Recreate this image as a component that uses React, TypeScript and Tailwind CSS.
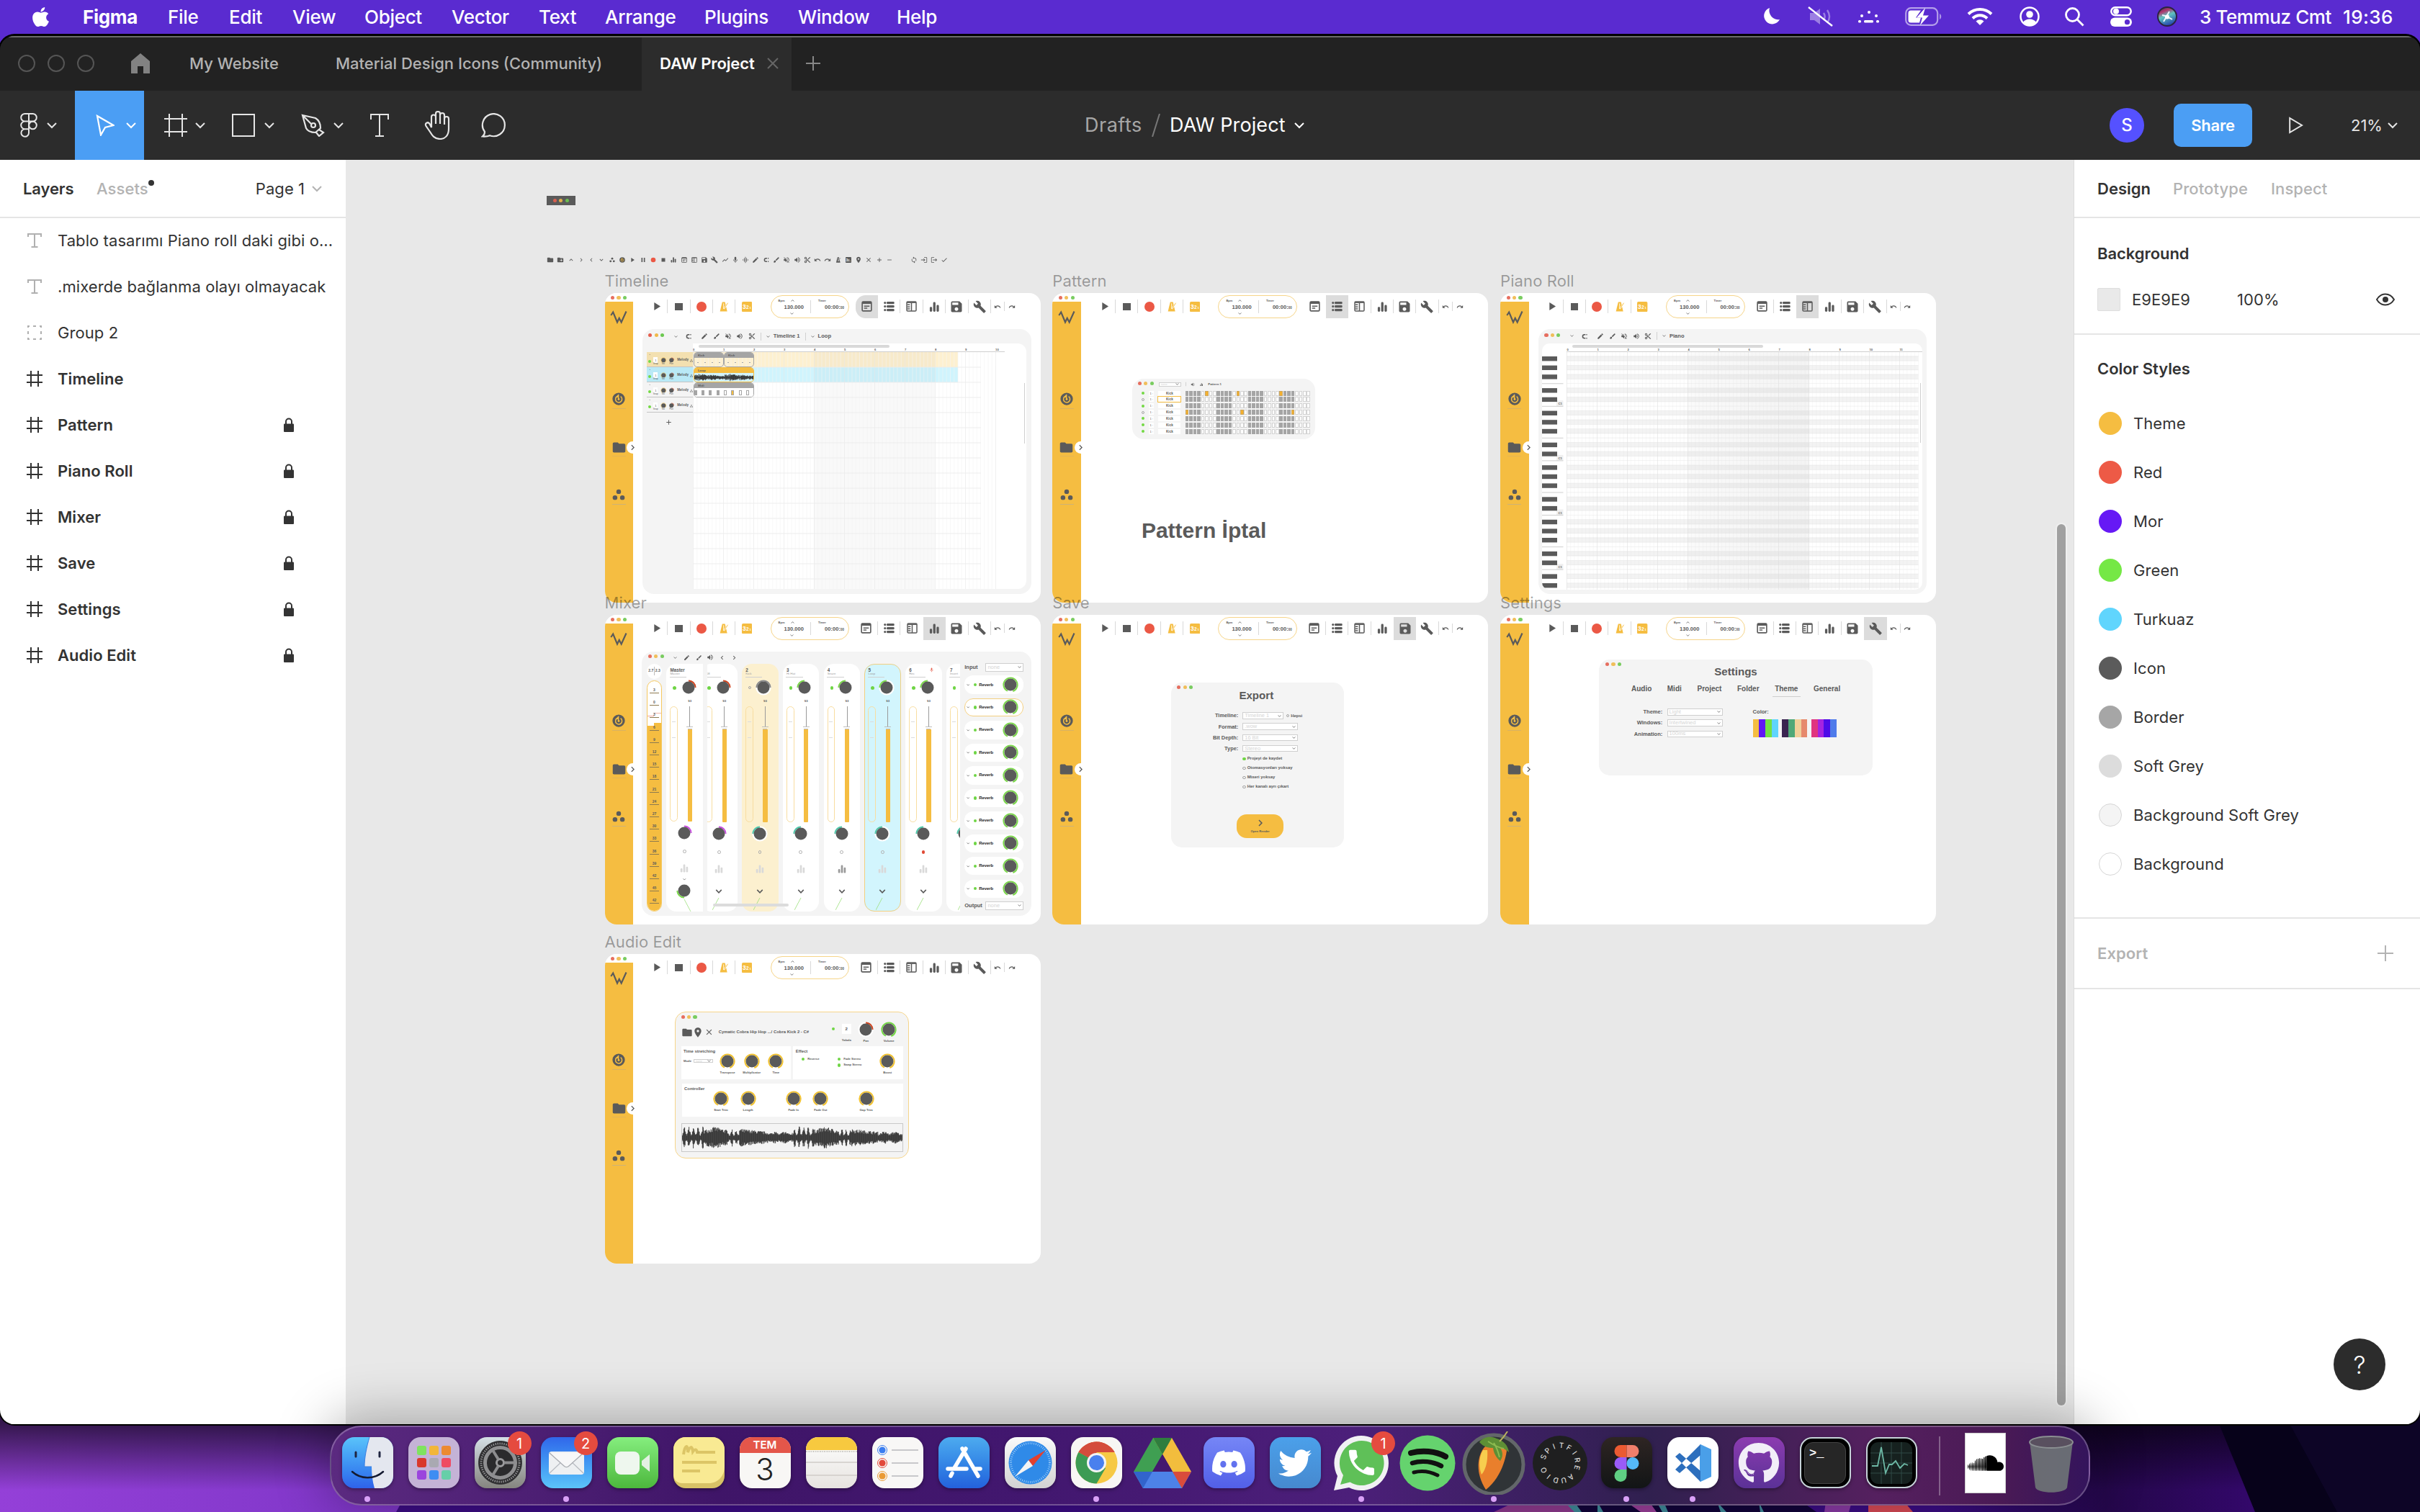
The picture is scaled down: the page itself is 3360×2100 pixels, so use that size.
import React from "react";
import {
  MdAdd, MdBrush, MdCheck, MdChevronLeft, MdChevronRight, MdClose, MdContentCut, MdCreateNewFolder, MdEdit,
  MdExpandLess, MdExpandMore, MdFiberManualRecord, MdFolder, MdGraphicEq, MdLogin, MdLogout, MdMic, MdPause,
  MdPlace, MdPlayArrow, MdRedo, MdRemove, MdSave, MdBuild, MdShowChart, MdStop, MdUndo, MdVolumeOff, MdVolumeUp,
  MdLoop,
} from "react-icons/md";
import { FaApple, FaDiscord, FaGithub, FaSoundcloud, FaTwitter } from "react-icons/fa";

type IconProps = { className?: string };

/* ---------- small drawings ---------- */

const Cluster = ({ className }: IconProps) => (
  <svg viewBox="0 0 24 24" className={className} fill="currentColor">
    <circle cx="12" cy="6.5" r="4.3" /><circle cx="5.2" cy="17.5" r="4.3" /><circle cx="18.8" cy="17.5" r="4.3" />
  </svg>
);
const Restore = ({ className }: IconProps) => (
  <svg viewBox="0 0 24 24" className={className}>
    <circle cx="12" cy="12" r="11.5" fill="currentColor" />
    <path d="M8 8.2a6 6 0 1 0 7.5-.6M11.5 3.8v8.4M11.5 5l-3.6 3.3h4.6" fill="none" stroke="#f5bd41" strokeWidth="2" />
    <circle cx="12" cy="12.6" r="1.9" fill="#f5bd41" />
  </svg>
);
const Bars = ({ className }: IconProps) => (
  <svg viewBox="0 0 24 24" className={className} fill="currentColor">
    <rect x="1.5" y="12" width="5.4" height="11" rx="2.4" /><rect x="9.3" y="1" width="5.4" height="22" rx="2.4" /><rect x="17.1" y="7.5" width="5.4" height="15.5" rx="2.4" />
  </svg>
);
const Note = ({ className }: IconProps) => (
  <svg viewBox="0 0 24 24" className={className} fill="none" stroke="currentColor" strokeWidth="2.6">
    <rect x="1.8" y="1.8" width="20.4" height="20.4" rx="2" /><path d="M2 4.5h20" strokeWidth="3.4" /><path d="M6 11.5h12M6 16h7" />
  </svg>
);
const ListIcon = ({ className }: IconProps) => (
  <svg viewBox="0 0 24 24" className={className} fill="currentColor">
    {[1.5, 9.5, 17.5].map((y) => (
      <g key={y}><circle cx="2.8" cy={y + 2.6} r="2.5" /><rect x="6.5" y={y} width="17" height="5.2" rx="2" /></g>
    ))}
  </svg>
);
const PianoIcon = ({ className }: IconProps) => (
  <svg viewBox="0 0 24 24" className={className} fill="none" stroke="currentColor" strokeWidth="2.4">
    <rect x="1.6" y="1.6" width="20.8" height="20.8" rx="2" /><path d="M2 3.6h20M12 3v19M3 8.5h5.5M3 13h5.5M3 17.5h5.5" />
  </svg>
);
const Metronome = ({ className }: IconProps) => (
  <svg viewBox="0 0 24 24" className={className}>
    <path d="M8.2 1h6.6L20 23H2.8z" fill="currentColor" /><path d="M11.6 4v13" stroke="#fff" strokeWidth="1.6" /><path d="M12 17 22 3" stroke="#fff" strokeWidth="3" /><path d="M13 16 21.5 3" stroke="currentColor" strokeWidth="1.6" />
  </svg>
);
const CountIn = ({ className }: IconProps) => (
  <svg viewBox="0 0 24 24" className={className}>
    <rect width="24" height="24" rx="3" fill="currentColor" />
    <text x="1.5" y="17.5" fontSize="14" fontWeight="700" fill="#fff" fontFamily="Liberation Sans">3</text>
    <text x="10" y="17.5" fontSize="11" fontWeight="700" fill="#fff" fontFamily="Liberation Sans">2</text>
    <text x="17.5" y="17.5" fontSize="7" fontWeight="700" fill="#fff" fontFamily="Liberation Sans">1</text>
  </svg>
);
const Magnet = ({ className }: IconProps) => (
  <svg viewBox="0 0 24 24" className={className} fill="none" stroke="currentColor" strokeWidth="4.4">
    <path d="M15 5H11a7 7 0 0 0 0 14h4" /><path d="M18 5h3.5M18 19h3.5" />
  </svg>
);
const Down = ({ className }: IconProps) => (
  <svg viewBox="0 0 12 12" className={className} fill="none" stroke="currentColor" strokeWidth="1.9"><path d="m1.5 3.5 4.5 4.6 4.5-4.6" /></svg>
);
const HashIcon = ({ className }: IconProps) => (
  <svg viewBox="0 0 22 22" className={className} fill="none" stroke="currentColor" strokeWidth="2"><path d="M6 0v22M16 0v22M0 6h22M0 16h22" /></svg>
);

const Dot = ({ className }: IconProps) => <span className={`block shrink-0 rounded-full ${className}`} />;

const Lights = ({ bright = false }: { bright?: boolean }) => (
  <div className={`flex gap-[3.2px] ${bright ? "" : "opacity-90"}`}>
    <Dot className="size-[5.2px] bg-[#e5604f]" /><Dot className="size-[5.2px] bg-[#f0b94a]" /><Dot className="size-[5.2px] bg-[#6cc850]" />
  </div>
);

const point = (deg: number, r: number) => {
  const a = ((deg - 90) * Math.PI) / 180;
  return `${(12 + r * Math.cos(a)).toFixed(2)} ${(12 + r * Math.sin(a)).toFixed(2)}`;
};
function Knob({ color, from, to, halo, className = "size-6" }: { color: string; from: number; to: number; halo?: boolean; className?: string }) {
  return (
    <svg viewBox="0 0 24 24" className={`shrink-0 ${className}`}>
      {halo && <circle cx="12" cy="12" r="10.6" fill="#fff" />}
      <path d={`M${point(from, 9.6)}A9.6 9.6 0 ${to - from > 180 ? 1 : 0} 1 ${point(to, 9.6)}`} fill="none" stroke={color} strokeWidth="2" />
      <circle cx="12" cy="12" r="8.5" fill="#5a5a5a" />
    </svg>
  );
}

function wavePath(width: number, height: number) {
  let seed = 7;
  const rnd = () => (seed = (seed * 16807) % 2147483647) / 2147483647;
  const mid = height / 2;
  let d = "";
  for (let x = 0; x < width; x += 0.6) {
    const t = ((x / width) * 2) % 1;
    let e = 0.5;
    if (t < 0.2) e = 0.25 + 0.6 * Math.pow(Math.abs(Math.sin(t * 75)), 3);
    else if (t < 0.42) e = 0.8 - Math.abs(t - 0.3) * 2.2;
    else if (t < 0.52) e = 0.22 + 0.5 * Math.pow(Math.abs(Math.sin(t * 80)), 4);
    else if (t < 0.78) e = 0.66 - (t - 0.52) * 0.9;
    else e = 0.25 + 0.2 * Math.abs(Math.sin(t * 32));
    const up = mid * e * (0.5 + 0.5 * rnd());
    const down = mid * e * (0.5 + 0.5 * rnd());
    d += `M${x.toFixed(1)} ${(mid - up).toFixed(1)}V${(mid + down).toFixed(1)}`;
  }
  return d;
}
const Wave = ({ w, h, className }: { w: number; h: number; className?: string }) => (
  <svg viewBox={`0 0 ${w} ${h}`} className={className} preserveAspectRatio="none"><path d={wavePath(w, h)} stroke="#2e2e2e" strokeWidth=".9" /></svg>
);

const Select = ({ value, className }: { value: string; className?: string }) => (
  <div className={`flex items-center justify-between border border-[#cfcfcf] bg-white px-[2px] text-[#d5d5d5] ${className}`}>
    <span className="leading-none font-normal">{value}</span><Down className="size-[5px] text-[#5a5a5a]" />
  </div>
);

/* ---------- artboard shell ---------- */

const views = [Note, ListIcon, PianoIcon, Bars, MdSave, MdBuild];
const viewSizes = ["size-[15px]", "size-[15px]", "size-[15px]", "size-[14.5px]", "size-[20px]", "size-[18.5px]"];

function Artboard({ name, x, y, active, children }: { name: string; x: number; y: number; active: number; children?: React.ReactNode }) {
  return (
    <section className="absolute w-[605px] [font-family:'Liberation_Sans',sans-serif] text-[#5a5a5a]" style={{ left: x, top: y - 30 }}>
      <h3 className="relative h-[30px] [font-family:Inter,sans-serif] text-[22px] leading-[27px] tracking-[0.1px] text-black/35">{name}</h3>
      <div className="flex h-[430px] overflow-hidden rounded-[16px] bg-white">
        <aside className="relative flex w-[39.6px] shrink-0 flex-col">
          <div className="h-[12.4px] bg-white pt-[4px] pl-[8.6px]"><Lights /></div>
          <div className="flex flex-1 flex-col items-center bg-[#f5bd41]">
            <svg viewBox="-1 -1 24 19" className="mt-[11.500px] h-[19px] w-[24px]" fill="none" stroke="#5a5a5a" strokeWidth="2.200"><path d="M.3 6 3.200 1.500l5.800 14 2.700-5.500 3 5.500L21.500.5" /></svg>
            <Restore className="mt-[95px] size-[18px]" />
            <i className="mt-[4px] h-[1px] w-[19px] bg-[#d9b263]" />
            <div className="mt-[42px] flex h-[23px] w-full items-center pl-[9.2px]">
              <MdFolder className="size-[21px] shrink-0" />
              <span className="ml-[.8px] flex size-[17px] shrink-0 items-center justify-center rounded-full bg-white"><MdChevronRight className="size-[15px] shrink-0" /></span>
            </div>
            <i className="h-[1px] w-[19px] bg-[#e4b555]" />
            <Cluster className="mt-[44px] size-[18px]" />
            <i className="mt-[4px] h-[1px] w-[19px] bg-[#cdb377]" />
          </div>
        </aside>
        <div className="flex min-w-0 flex-1 flex-col">
          <header className="flex h-[37.6px] shrink-0 items-center pl-[17px]">
            {[
              <MdPlayArrow className="size-[19px]" />, <span className="size-[10.6px] bg-[#5a5a5a]" />, <Dot className="size-[14px] bg-[#eb5845]" />,
              <Metronome className="size-[14px] text-[#f5bd41]" />, <CountIn className="size-[14.4px] text-[#f5bd41]" />,
            ].map((icon, i) => (
              <div key={i} className={`flex h-[19px] w-[31.3px] items-center justify-center ${i < 4 ? "border-r border-[#d9d9d9]" : ""}`}>{icon}</div>
            ))}
            <div className="mt-[.5px] ml-[17px] flex h-[32px] w-[109.5px] items-center rounded-full border border-[#f6d58a] text-[7.56px] font-bold">
              <div className="flex h-full w-[54.5px] flex-col items-center pl-[12px]">
                <div className="flex h-[10px] w-full items-end"><span className="-ml-[2px] w-[17px] text-[4px] leading-[6px]">Bpm</span><Down className="mb-[1px] size-[5px] rotate-180" /></div>
                <span className="mt-[1px] w-full pl-[6px] leading-[9px]">130.000</span>
                <Down className="mt-[2px] mr-[8px] size-[5px]" />
              </div>
              <i className="h-[18px] w-[1px] bg-[#d9d9d9]" />
              <div className="flex h-full flex-1 flex-col pl-[10px]">
                <span className="mt-[4px] text-[4px] leading-[6px]">Timer</span>
                <span className="mt-[1px] pl-[9px] leading-[9px] whitespace-nowrap">00:00:<span className="text-[4.5px]">00</span></span>
              </div>
            </div>
            <div className="ml-[8.6px] flex items-center">
              {views.map((Icon, i) => (
                <div key={i} className={`flex h-[31.5px] w-[31.4px] items-center ${i === active ? "bg-[#dcdcdc]" : ""} ${i === active && i === 0 ? "rounded-l-[14px]" : ""}`}>
                  <div className={`flex h-[19px] w-full items-center justify-center ${i === active || i + 1 === active ? "" : "border-r border-[#d9d9d9]"}`}><Icon className={viewSizes[i]} /></div>
                </div>
              ))}
              <div className="flex h-[13px] w-[19.3px] items-center justify-center border-r border-[#d9d9d9]"><MdUndo className="size-[10px]" /></div>
              <div className="flex w-[19px] items-center justify-center"><MdRedo className="size-[10px]" /></div>
            </div>
          </header>
          {children}
        </div>
      </div>
    </section>
  );
}

const Rule = () => <i className="h-[11px] w-[1px] bg-[#d0d0d0]" />;

function EditorBar({ labels, bright }: { labels: string[]; bright?: boolean }) {
  return (
    <div className="flex h-[19.5px] items-center pl-[8.5px] text-[7.56px] font-bold">
      <div className="mb-[3px]"><Lights bright={bright} /></div>
      <Down className="ml-[13.5px] size-[5px]" />
      <Magnet className="ml-[11px] size-[8.5px]" />
      <div className="ml-[8px]"><Rule /></div>
      <div className="ml-[5px] flex gap-[6.4px]">
        <MdEdit className="size-[10px]" /><MdBrush className="size-[10px]" /><MdVolumeOff className="size-[10px]" /><MdVolumeUp className="size-[10px]" /><MdContentCut className="size-[10px]" />
      </div>
      {labels.map((l) => (
        <div key={l} className="ml-[7px] flex items-center"><Rule /><Down className="mr-[5px] ml-[7px] size-[5px]" /><span className="leading-none whitespace-nowrap">{l}</span></div>
      ))}
    </div>
  );
}

const Ruler = ({ count, className }: { count: number; className: string }) => (
  <div className={`flex h-[5.7px] border-b border-[#cfcfcf] text-[4.2px] leading-[5px] font-bold ${className}`}>
    {Array.from({ length: count }, (_, i) => <span key={i} className="w-[42px] shrink-0">{i}</span>)}
  </div>
);

/* ---------- timeline ---------- */

function TimelineGrid() {
  return (
    <svg viewBox="0 0 463 329" className="h-[329px] w-[463px]">
      <rect width="368" height="21" fill="#fdf0d0" /><rect y="21" width="368" height="21" fill="#d0f4fd" />
      <rect x="168" width="168" height="329" fill="#000" opacity=".025" />
      {Array.from({ length: 81 }, (_, i) => <path key={i} d={`M${i * 5.25 + 0.5} 0V329`} stroke={i % 8 === 0 ? "#e6e6e6" : "#f4f4f4"} strokeWidth=".8" opacity=".7" />)}
      {Array.from({ length: 15 }, (_, i) => <path key={i} d={`M0 ${21 * (i + 1)}H400`} stroke="#ebebeb" strokeWidth=".9" />)}
    </svg>
  );
}

const trackTints = ["bg-[#f3e0b0]", "bg-[#b9e9f6]", "", ""];

function Clip({ name, wide, amber, children }: { name: string; wide?: boolean; amber?: boolean; children: React.ReactNode }) {
  return (
    <div className={`flex h-[21px] flex-col overflow-hidden rounded-[5px] border ${wide ? "w-[84px]" : "w-[42px]"} ${amber ? "border-[#f5bd41]" : "border-[#a5a5a5]"}`}>
      <div className={`h-[6.5px] pl-[5px] text-[4.4px] leading-[7px] font-bold ${amber ? "bg-[#f5bd41]" : "bg-[#a5a5a5]"}`}>{name}</div>
      {children}
    </div>
  );
}

function Timeline() {
  return (
    <div className="mt-[12.7px] ml-[12.7px] h-[368px] w-[540px] rounded-[16px] bg-[#f4f4f4]">
      <EditorBar labels={["Timeline 1", "Loop"]} bright />
      <div className="flex pl-[6px]">
        <div className="w-[64.3px] shrink-0 pt-[12.5px]">
          {trackTints.map((tint, i) => (
            <div key={i} className={`flex h-[21px] flex-col border-b border-[#c4c4c4] pl-[2px] ${tint}`}>
              <Down className="mt-[2px] ml-[1px] size-[2.6px]" />
              <div className="mt-[2px] flex items-center">
                <Dot className="size-[4px] bg-[#73d944]" />
                <div className="ml-[2.5px] flex w-[8px] flex-col items-center text-[3px] leading-[3px]"><span className="flex h-[8px] w-[6px] items-center justify-center bg-white text-[4px]">1</span>Snap</div>
                <div className="ml-[2px] flex w-[9px] flex-col items-center text-[3px] leading-[3px]"><Knob color="#f5bd41" from={-160} to={150} className="size-[8.5px]" />Vol</div>
                <div className="ml-[2.5px] flex w-[9px] flex-col items-center text-[3px] leading-[3px]"><Knob color="#cf4520" from={0} to={90} className="size-[8.5px]" />Pan</div>
                <span className="mb-[2px] ml-[3.5px] text-[4.6px] leading-none font-bold">Melody</span>
                <Cluster className="mb-[2px] ml-[2px] size-[4px]" />
              </div>
            </div>
          ))}
          <MdAdd className="mt-[7.5px] ml-[25.5px] size-[11px]" />
        </div>
        <div className="relative h-[341.7px] w-[463px] overflow-hidden rounded-tr-[12px] rounded-br-[12px] bg-white">
          <div className="mt-[2.3px] ml-[8px] h-[4px] w-[265px] rounded-full bg-[#d9d9d9]" />
          <Ruler count={11} className="w-[433px]" />
          <div className="flex">
            <TimelineGrid />
          </div>
          <div className="absolute top-[12.3px] left-[.8px] flex w-[84px] flex-col">
            <div className="flex">
              {[0, 1].map((i) => <Clip key={i} name="Kick"><div className="flex justify-around pt-[6px]">{[0, 1, 2, 3].map((k) => <i key={k} className="h-[.7px] w-[2px] bg-[#a5a5a5]" />)}</div></Clip>)}
            </div>
            <Clip name="Loop" wide amber><Wave w={84} h={12} className="h-[13px] w-[84px]" /></Clip>
            <Clip name="Midi" wide>
              <div className="flex items-center gap-[6.3px] bg-white pt-[3px] pb-[6px]">
                {[1, 1, 1, 1, 0, 2, 0, 0].map((v, k) => <i key={k} className={`h-[7px] w-[4px] shrink-0 border border-[#a5a5a5] ${v === 1 ? "bg-[#a5a5a5]" : v === 2 ? "bg-[#f5bd41]" : "bg-white"}`} />)}
              </div>
            </Clip>
          </div>
          <i className="absolute top-[55px] right-[2px] h-[84px] w-[1.4px] bg-[#cfcfcf]" />
        </div>
      </div>
    </div>
  );
}

/* ---------- pattern ---------- */

const stepHits = ["0:5", "0:13", "0:24", "3:0", "3:14", "3:27"];

function Pattern() {
  return (
    <>
      <div className="mt-[81.5px] ml-[71px] h-[84px] w-[254.6px] rounded-[16px] bg-[#f4f4f4] pl-[8px]">
        <div className="flex h-[15.5px] items-center text-[4.8px] font-bold">
          <div className="mb-[3px]"><Lights /></div>
          <Select value="none" className="ml-[7px] h-[6.4px] w-[31px] text-[4px]" />
          <div className="flex scale-y-50 pl-[6.5px]"><Rule /></div>
          <MdVolumeUp className="ml-[6px] size-[6px]" /><Bars className="ml-[6.5px] size-[4.4px]" /><span className="ml-[7px] text-[4.4px]">Pattern 1</span>
        </div>
        {Array.from({ length: 7 }, (_, r) => (
          <div key={r} className="flex h-[8.85px] items-center pl-[5px]">
            <Dot className={r === 1 || r === 3 ? "size-[4px] border-[.5px] border-[#a5a5a5]" : "size-[4px] bg-[#73d944]"} />
            <span className="ml-[6px] w-[7px] bg-white pl-[1.5px] text-[4px] leading-[7px]">1 :</span>
            <span className={`ml-[6.5px] h-[7px] w-[31px] bg-white text-center text-[4.6px] leading-[7px] font-bold ${r === 1 ? "outline-[.6px] outline-[#f5bd41]" : ""}`}>Kick</span>
            <div className="ml-[6.5px] flex gap-[.85px]">
              {Array.from({ length: 32 }, (_, c) => (
                <i key={c} className={`h-[7px] w-[4.6px] border ${stepHits.includes(`${r}:${c}`) ? "border-[#c9a560] bg-[#f5b12f]" : c % 8 < 4 ? "border-[#a5a5a5] bg-[#a5a5a5]" : "border-[#d2d2d2] bg-white"}`} />
              ))}
            </div>
          </div>
        ))}
      </div>
      <p className="mt-[109px] ml-[84px] text-[30px] leading-[36px] font-bold whitespace-nowrap">Pattern İptal</p>
    </>
  );
}

/* ---------- piano roll ---------- */

const blackRows = Array.from({ length: 52 }, (_, i) => i).filter((i) => [0, 2, 4, 7, 9].includes(i % 12));

function Piano() {
  return (
    <div className="mt-[12.5px] ml-[13.4px] h-[367.5px] w-[539px] rounded-[16px] bg-[#f4f4f4]">
      <EditorBar labels={["Piano"]} />
      <div className="relative ml-[5.5px] h-[342px] w-[527.5px] overflow-hidden rounded-[10px] bg-white">
        <div className="mt-[2.3px] ml-[41.7px] h-[4px] w-[265px] rounded-full bg-[#d9d9d9]" />
        <Ruler count={12} className="ml-[34px] w-[494px]" />
        <svg viewBox="0 0 527.5 330" className="h-[330px] w-[527.5px]">
          <defs><linearGradient id="band"><stop offset="0" stopOpacity=".02" /><stop offset="1" stopOpacity=".045" /></linearGradient></defs>
          {blackRows.map((s) => <rect key={s} x="34" y={5.8 + 6.3 * s} width="488.5" height="6.5" fill="#f3f3f3" />)}
          <rect x="202" width="169" height="330" fill="url(#band)" />
          {Array.from({ length: 94 }, (_, i) => <path key={i} d={`M${34.4 + i * 5.25} 0V330`} stroke="#dedede" strokeWidth=".7" opacity={i % 8 === 0 ? 0.9 : 0.3} />)}
          {Array.from({ length: 52 }, (_, i) => <path key={i} d={`M34 ${5.8 + 6.3 * i}H522.5`} stroke="#e4e4e4" strokeWidth=".6" opacity=".8" />)}
          {[11, 23, 35, 47].map((s) => (
            <g key={s}><rect x="20" y={s * 6.3 - 2} width="9.5" height="8" fill="#f0f0f0" /><text x="22.5" y={s * 6.3 + 4} fontSize="4.2" fontWeight="700" fill="#5a5a5a">C1</text></g>
          ))}
          {[6, 11, 18, 23, 30, 35, 42, 47].map((s) => <path key={s} d={`M0 ${6 + s * 6.3}H29.5`} stroke="#c8c8c8" strokeWidth=".9" />)}
          {blackRows.map((s) => <rect key={s} y={6 + 6.3 * s} width="21" height="6.4" fill="#5a5a5a" />)}
        </svg>
        <i className="absolute top-[55px] right-[2px] h-[83px] w-[1.4px] bg-[#cfcfcf]" />
      </div>
    </div>
  );
}

/* ---------- mixer ---------- */

type Channel = { no: string; name: string; kind?: string; arc: string; arc2: string; from: number; to: number; off?: boolean };
const red = { arc: "#cf4520", arc2: "#c94ee0", from: 0, to: 90 };
const green = { arc: "#7bd94a", arc2: "#4fc9ab", from: -90, to: 0 };
const master: Channel = { no: "Master", name: "Master", kind: "master", ...red };
const channels: Channel[] = [
  { no: "", name: "808", ...red },
  { no: "2", name: "Kick", kind: "amber", ...green, arc: "#8a8a8a", to: 90, off: true },
  { no: "3", name: "Hi Hat", ...green },
  { no: "4", name: "Snare", kind: "dark", ...green },
  { no: "5", name: "Loop", kind: "cyan", ...green },
  { no: "6", name: "Rec", kind: "rec", ...green },
  { no: "7", name: "Insert", ...green },
];

function Strip({ c }: { c: Channel }) {
  const tint = c.kind === "amber" ? "bg-[#fcf0cf] rounded-[14px]" : c.kind === "cyan" ? "bg-[#d2f5fd] rounded-[14px] outline-1 -outline-offset-1 outline-[#f3cf80]" : c.kind === "master" ? "bg-white rounded-l-[14px]" : "bg-white rounded-[14px]";
  const halo = c.kind === "amber" || c.kind === "cyan";
  const isMaster = c.kind === "master";
  return (
    <div className={`flex h-[344.3px] w-[50.5px] shrink-0 flex-col ${tint}`}>
      <div className="mt-[5.4px] flex h-[8px] items-center justify-between pr-[11px] pl-[5.2px] text-[6.3px] leading-[8px] font-bold"><span>{c.no}</span>{c.kind === "rec" && <MdMic className="size-[7px] text-[#e5604f]" />}</div>
      <span className="-mt-[.5px] pl-[5.2px] text-[4.4px] leading-[4.4px] text-[#a0a0a0]">{c.name}</span>
      <i className="mt-[.8px] ml-[4.6px] h-[.8px] w-[23.5px] bg-[#d0d0d0]" />
      <div className="mt-[2.8px] flex h-6 items-center pl-[9px]">
        <Dot className={c.off ? "size-[4.4px] border-[.6px] border-[#a5a5a5]" : "size-[4.6px] bg-[#6fd545]"} />
        <Knob color={c.arc} from={c.from} to={c.to} halo={halo} className="ml-[5px] size-6" />
      </div>
      <span className="mt-[4.2px] pl-[30px] text-[4.4px] leading-[6px] font-bold">93</span>
      <div className="mt-[3.6px] flex h-[161px] pl-[5px]">
        <div className="flex h-full w-[10.8px] flex-col items-center rounded-full border border-[#f8dda0] pt-[20px]"><i className="h-[.8px] w-[5px] bg-[#dcdcdc]" /><i className="mt-[21px] h-[.8px] w-[5px] bg-[#dcdcdc]" /></div>
        <div className="ml-[11.7px] flex w-[10px] flex-col items-center">
          <i className="h-[28px] w-[.9px] bg-[#9a9a9a]" /><i className="h-[.8px] w-[9px] bg-[#bdbdbd]" /><i className="mt-[2px] h-[1.4px] w-[6px] bg-[#bdbdbd]" /><i className="w-[6.2px] flex-1 rounded-b-[1px] bg-[#f5bd41]" />
        </div>
      </div>
      <Knob color={c.arc2} from={c.kind === "amber" ? -90 : c.from} to={c.kind === "amber" ? 0 : c.to} halo={halo} className="mt-[4.4px] ml-[13px] size-6" />
      <Dot className={`mt-[11px] ml-[22.7px] size-[4.6px] ${c.kind === "rec" ? "bg-[#e04a35]" : "border-[.7px] border-[#b0b0b0]"}`} />
      <Bars className={`mt-[15px] ml-[19px] size-[12px] ${c.kind === "dark" ? "text-[#9a9a9a]" : "text-[#d9d9d9]"}`} />
      {isMaster ? (
        <><Down className="mt-[7px] ml-[22.8px] size-[4.6px]" /><Knob color="#7bd94a" from={180} to={270} className="mt-[1.5px] ml-[13px] size-6" /></>
      ) : <Down className="mt-[20px] mb-[4px] ml-[20px] size-[10px]" />}
      <svg viewBox="0 0 20 17" className="ml-[16px] h-[17px] w-[20px]"><path d={isMaster ? "M9 0 18 17" : "M9 0 0 17"} stroke="#9be07a" strokeWidth=".8" /></svg>
    </div>
  );
}

const meterMarks = ["3", "0", "3", "6", "9", "12", "15", "18", "21", "24", "27", "30", "33", "36", "39", "42", "45", "42"];

function Mixer() {
  return (
    <div className="mt-[13px] ml-[12.2px] h-[367.6px] w-[540.4px] rounded-[16px] bg-[#f4f4f4]">
      <div className="flex h-[17px] items-center pl-[8.5px]">
        <div className="mb-[3px]"><Lights /></div>
        <Down className="ml-[13.5px] size-[5px]" />
        <MdEdit className="ml-[9px] size-[9px]" /><MdBrush className="ml-[7.5px] size-[9px]" /><MdVolumeUp className="ml-[6.5px] size-[10px]" /><MdChevronLeft className="ml-[6px] size-[11px]" /><MdChevronRight className="ml-[5.5px] size-[11px]" />
      </div>
      <div className="flex pl-[6.6px]">
        <div className="w-[21.2px] text-[5px] font-bold">
          <div className="flex h-[21px] items-center justify-center gap-[1px] rounded-[50%] bg-white"><span>2.7</span><i className="h-[12px] w-[.6px] bg-[#bbb]" /><span>2.3</span></div>
          <div className="relative mt-[2.3px] h-[321px] overflow-hidden rounded-full border border-[#f5c85f] bg-white">
            <i className="absolute top-[61.7px] bottom-0 left-0 w-1/2 bg-[#f5bd41]" /><i className="absolute top-[58.4px] right-0 bottom-0 w-1/2 bg-[#f5bd41]" />
            <i className="absolute top-[48.5px] left-0 h-[.8px] w-1/2 bg-[#f0a59a]" /><i className="absolute top-[44px] right-0 h-[.8px] w-1/2 bg-[#f0b5aa]" />
            <div className="relative flex flex-col items-center pt-[10px]">
              {meterMarks.map((m, i) => <span key={i} className="mb-[10.2px] flex h-[7.03px] w-[13px] items-start justify-center border-b border-[#8d7a50] leading-[5px]">{m}</span>)}
            </div>
          </div>
        </div>
        <div className="ml-[6.2px]"><Strip c={master} /></div>
        <div className="relative ml-[6px] w-[351.5px] overflow-hidden">
          <div className="-ml-[8.5px] flex gap-[6.25px]">{channels.map((c, i) => <Strip key={i} c={c} />)}</div>
          <i className="absolute bottom-[7px] left-[8px] h-[4px] w-[105px] rounded-full bg-[#dcdcdc]" />
        </div>
        <div className="ml-[6px] w-[81.8px] text-[7.5px] font-bold">
          <div className="flex h-[10.5px] items-center justify-between">Input<Select value="none" className="h-[12px] w-[52.6px] font-normal" /></div>
          <div className="mt-[6.2px] flex flex-col gap-[6.2px]">
            {Array.from({ length: 10 }, (_, i) => (
              <div key={i} className={`flex h-[25.3px] items-center rounded-[12px] bg-white pl-[2.5px] text-[5.9px] font-bold text-[#222] ${i === 1 ? "outline-1 -outline-offset-1 outline-[#f3cf80]" : ""}`}>
                <Down className="size-[4.6px] text-[#5a5a5a]" /><Dot className="mr-[3px] ml-[5.5px] size-[4.4px] bg-[#6fd545]" /><span className="w-[32px]">Reverb</span>
                <Knob color="#7bd94a" from={-155} to={160} />
              </div>
            ))}
          </div>
          <div className="mt-[5.6px] flex h-[10.5px] items-center justify-between">Output<Select value="none" className="h-[12px] w-[52.6px] font-normal" /></div>
        </div>
      </div>
    </div>
  );
}

/* ---------- save / settings ---------- */

const exportFields = [["Timeline:", "Timeline 1"], ["Format:", ".wow"], ["Bit Depth:", "16 Bit"], ["Type:", "Stereo"]];
const exportChecks = ["Projeyi de kaydet", "Otomasyonları yoksay", "Mixeri yoksay", "Her kanalı ayrı çıkart"];

function Save() {
  return (
    <div className="mt-[56.4px] ml-[125.4px] flex h-[229.5px] w-[240px] flex-col rounded-[15px] bg-[#f4f4f4]">
      <div className="flex h-[9px] items-center pt-[4px] pl-[8px]"><Lights /></div>
      <h4 className="w-full pr-1 text-center text-[15.1px] leading-[17px] font-bold">Export</h4>
      <div className="mt-[12.5px] text-[7.4px] font-bold">
        {exportFields.map(([label, value], i) => (
          <div key={label} className="flex h-[15.1px] items-center">
            <span className="w-[93px] text-right">{label}</span>
            <Select value={value} className={`ml-[6px] h-[9.4px] ${i === 0 ? "w-[56.5px]" : "w-[77px]"}`} />
            {i === 0 && <><Dot className="ml-[4px] size-[4.4px] border-[.6px] border-[#a5a5a5]" /><span className="ml-[2px] text-[5.9px]">Hepsi</span></>}
          </div>
        ))}
      </div>
      <div className="mt-[.5px] pl-[99px] text-[5.9px] font-bold">
        {exportChecks.map((c, i) => (
          <div key={c} className="flex h-[13px] items-center gap-[2px]"><Dot className={i === 0 ? "size-[4.4px] bg-[#6fd545]" : "size-[4.4px] border-[.6px] border-[#a5a5a5]"} />{c}</div>
        ))}
      </div>
      <div className="mt-[32px] ml-[91px] flex h-[32.4px] w-[64.6px] flex-col items-center rounded-[14px] bg-[#f5bd41] text-[4.2px] font-bold"><MdChevronRight className="mt-[3px] size-[18px]" /><span className="leading-[5px]">Open Render</span></div>
    </div>
  );
}

const settingTabs: [string, number][] = [["Audio", 49.8], ["Midi", 41.7], ["Project", 55.5], ["Folder", 52.2], ["Theme", 53.8], ["General", 40]];
const settingFields = [["Theme:", "Light"], ["Windows:", "Intertwined"], ["Animation:", "100ms"]];
const palettes = [["#f5bd41", "#6017f5", "#73e144", "#5fd4fd"], ["#3a2450", "#4fa878", "#f0d09a", "#e6896d"], ["#e0357f", "#a524e0", "#4d0be8", "#4f7bea"]];

function Settings() {
  return (
    <div className="mt-[24.7px] ml-[97.4px] flex h-[161px] w-[380px] flex-col rounded-[15px] bg-[#f4f4f4]">
      <div className="flex h-[9px] items-center pt-[3px] pl-[9px]"><Lights /></div>
      <h4 className="w-full text-center text-[15.1px] leading-[16px] font-bold">Settings</h4>
      <div className="mt-[9px] flex pl-[45px] text-[10px] leading-[14px] font-bold">
        {settingTabs.map(([t, w]) => <span key={t} style={{ width: w }}>{t}</span>)}
      </div>
      <i className="mt-[3px] ml-[241px] h-[1px] w-[39px] bg-[#cdcdcd]" />
      <div className="mt-[13px] flex text-[7.56px] font-bold">
        <div>
          {settingFields.map(([label, value]) => (
            <div key={label} className="flex h-[15.2px] items-center"><span className="w-[88.3px] text-right">{label}</span><Select value={value} className="ml-[6.3px] h-[9.4px] w-[77px]" /></div>
          ))}
        </div>
        <div className="ml-[42px]">
          <p className="leading-[15px]">Color:</p>
          <div className="mt-[3px] flex gap-[5.7px]">
            {palettes.map((p, i) => <div key={i} className="flex h-[25px] w-[35px]">{p.map((c) => <i key={c} className="flex-1" style={{ backgroundColor: c }} />)}</div>)}
          </div>
        </div>
      </div>
    </div>
  );
}

/* ---------- audio edit ---------- */

const LabeledKnob = ({ label, color = "#f2c22e", from = -155, to = 160, halo, className = "" }: { label: string; color?: string; from?: number; to?: number; halo?: boolean; className?: string }) => (
  <div className={`flex w-[32px] shrink-0 flex-col items-center text-[4.2px] font-bold whitespace-nowrap ${className}`}><Knob color={color} from={from} to={to} halo={halo} /><span className="mt-[1.2px] leading-[6px]">{label}</span></div>
);

function AudioEdit() {
  return (
    <div className="mt-[42.5px] ml-[58px] h-[204px] w-[325.4px] rounded-[15px] border border-[#f6d58a] bg-[#f4f4f4] px-[7.6px]">
      <div className="flex h-[9px] items-end"><Lights /></div>
      <div className="flex h-[37.5px] items-center text-[5.95px] font-bold">
        <MdFolder className="size-[16px] shrink-0" /><MdPlace className="-ml-[.5px] size-[16px] shrink-0" /><MdClose className="ml-[.5px] size-[13px] shrink-0" />
        <span className="ml-[7px] w-[157px] shrink-0 whitespace-nowrap">Cymatic Cobra Hip Hop .../ Cobra Kick 2 - C#</span>
        <Dot className="mb-[10px] size-[4.6px] bg-[#6fd545]" />
        <div className="mt-[2px] ml-[5px] flex w-[22px] flex-col items-center"><span className="h-[14px] w-[13px] bg-white text-center text-[6px] leading-[14px]">2</span><span className="mt-[6.5px] text-[4.2px] leading-[6px]">Yakala</span></div>
        <LabeledKnob label="Pan" color="#cf4520" from={0} to={90} halo />
        <LabeledKnob label="Volume" color="#73d944" />
      </div>
      <div className="flex justify-between">
        <div className="flex h-[46px] w-[152px] bg-white pl-[3.4px]">
          <div className="w-[45px] pt-[3px] text-[5.95px] font-bold whitespace-nowrap">Time stretching<div className="mt-[3.4px] flex items-center text-[4.2px] leading-[12px]">Mode<Select value="none" className="ml-[3px] h-[5px] w-[27px] shrink-0 text-[4px]" /></div></div>
          <LabeledKnob label="Transpose" className="mt-[9px]" /><LabeledKnob label="Multiplicator" className="mt-[9px] ml-[1.6px]" /><LabeledKnob label="Time" className="mt-[9px] ml-[1.6px]" />
        </div>
        <div className="flex h-[46px] w-[152.5px] bg-white pl-[3.4px] font-bold">
          <div className="w-[58px] pt-[3px] text-[5.95px]">Effect<div className="mt-[2.4px] flex items-center gap-[4px] pl-[8px] text-[4.2px] leading-[8px]"><Dot className="size-[4.4px] bg-[#6fd545]" />Reverse</div></div>
          <div className="w-[53.5px] pt-[14.5px] text-[4.2px] leading-[8.3px]">
            {["Fade Stereo", "Swap Stereo"].map((t) => <div key={t} className="flex items-center gap-[4px]"><Dot className="size-[4.4px] bg-[#6fd545]" />{t}</div>)}
          </div>
          <LabeledKnob label="Boost" className="mt-[9px]" />
        </div>
      </div>
      <div className="mt-[6.8px] ml-[1.3px] flex h-[45.3px] bg-white pl-[3px]">
        <span className="w-[35px] pt-[3px] text-[5.95px] font-bold">Controller</span>
        <LabeledKnob label="Start Trim" className="mt-[8.6px]" /><LabeledKnob label="Length" className="mt-[8.6px] ml-[5.6px]" /><LabeledKnob label="Fade In" className="mt-[8.6px] ml-[31.2px]" /><LabeledKnob label="Fade Out" className="mt-[8.6px] ml-[5.6px]" /><LabeledKnob label="Gap Trim" className="mt-[8.6px] ml-[31.3px]" />
      </div>
      <div className="mt-[9.4px] h-[40.4px] w-[308px] border border-[#c9c9c9]"><Wave w={306} h={38} className="h-[38px] w-[306px]" /></div>
    </div>
  );
}

/* ---------- icon strip on the canvas ---------- */

const stripIcons = [
  MdFolder, MdCreateNewFolder, MdExpandLess, MdChevronRight, MdChevronLeft, MdExpandMore, Cluster, Restore, MdPlayArrow, MdPause, MdFiberManualRecord, MdStop,
  Bars, Note, PianoIcon, MdSave, MdBuild, MdShowChart, MdMic, MdGraphicEq, MdEdit, Magnet, MdBrush, MdVolumeOff, MdVolumeUp, MdContentCut, MdUndo, MdRedo,
  Metronome, CountIn, MdPlace, MdClose, MdAdd, MdRemove,
];
const drawnIcons: unknown[] = [Cluster, Restore, Bars, Note, PianoIcon, Magnet, Metronome, CountIn];

function Canvas() {
  return (
    <main className="relative h-full flex-1 overflow-hidden bg-[#e8e8e8]">
      <div className="absolute top-[50px] left-[279px] flex h-[13px] w-[39.5px] items-center justify-center bg-[#5a5a5a]"><Lights /></div>
      <div className="absolute top-[133px] left-[277px] flex items-center text-[#5a5a5a]">
        {stripIcons.map((Icon, i) => (
          <span key={i} className="flex h-[12px] w-[14.28px] items-center justify-center"><Icon className={drawnIcons.includes(Icon) ? "size-[8px]" : Icon === MdFiberManualRecord ? "size-[10px] text-[#eb5845]" : "size-[10px]"} /></span>
        ))}
        <span className="w-[19.5px]" />
        {[MdLoop, MdLogin, MdLogout, MdCheck].map((Icon, i) => <span key={i} className="flex w-[14.28px] justify-center"><Icon className="size-[10px]" /></span>)}
      </div>
      <Artboard name="Timeline" x={359.5} y={185} active={0}><Timeline /></Artboard>
      <Artboard name="Pattern" x={981.3} y={185} active={1}><Pattern /></Artboard>
      <Artboard name="Piano Roll" x={1603} y={185} active={2}><Piano /></Artboard>
      <Artboard name="Mixer" x={359.5} y={632} active={3}><Mixer /></Artboard>
      <Artboard name="Save" x={981.3} y={632} active={4}><Save /></Artboard>
      <Artboard name="Settings" x={1603} y={632} active={5}><Settings /></Artboard>
      <Artboard name="Audio Edit" x={359.5} y={1103} active={-1}><AudioEdit /></Artboard>
      <i className="absolute top-[506px] right-[12px] h-[1224px] w-[12px] rounded-full bg-[#a0a0a0] ring-2 ring-[#efefef]" />
    </main>
  );
}

/* ---------- menu bar ---------- */

const menus: [string, number][] = [["File", 85], ["Edit", 88], ["View", 100], ["Object", 121], ["Vector", 121], ["Text", 92], ["Arrange", 138], ["Plugins", 130], ["Window", 137], ["Help", 60]];

function MenuBar() {
  return (
    <div className="flex h-12 shrink-0 items-center bg-[#5a2bd0] pb-[2px] text-[26px] text-white">
      <FaApple className="ml-[41px] size-[31px]" />
      <span className="ml-[43px] w-[118px] font-bold tracking-[-0.3px]">Figma</span>
      {menus.map(([m, w]) => <span key={m} className="font-medium tracking-[-0.3px]" style={{ width: w }}>{m}</span>)}
      <div className="flex-1" />
      <svg viewBox="0 0 26 26" className="w-[26px]"><path d="M11 1a11.5 11.5 0 1 0 14 16A12.5 12.5 0 0 1 11 1z" fill="#fff" /></svg>
      <svg viewBox="0 0 38 28" className="ml-[37px] w-[38px]" fill="none" stroke="#fff"><path d="M4 9h6l8-6v22l-8-6H4z" fill="#fff" opacity=".4" stroke="none" /><path d="M23 9c2 3 2 7 0 10M28 5c4 6 4 12 0 18" strokeWidth="2.4" opacity=".4" /><path d="m2 1 33 26" strokeWidth="2.4" /></svg>
      <svg viewBox="0 0 30 20" className="ml-[33px] w-[30px]" fill="#fff"><circle cx="15" cy="4" r="2" /><circle cx="5" cy="9" r="2" /><circle cx="25" cy="9" r="2" /><rect y="15" width="4" height="3.6" rx="1.5" /><rect x="8" y="15" width="13" height="3.6" rx="1.5" /><rect x="25" y="15" width="4" height="3.6" rx="1.5" /></svg>
      <svg viewBox="0 0 52 26" className="ml-[35px] w-[52px]"><rect x="1.2" y="1.2" width="44" height="23.6" rx="7" fill="none" stroke="#fff" strokeOpacity=".55" strokeWidth="2.2" /><path d="M48 9c3 1.500 3 6.500 0 8z" fill="#fff" opacity=".5" /><path d="M8 4.500h14l-7 10h7l-2 7H8a3.500 3.500 0 0 1-3.500-3.500V8A3.500 3.500 0 0 1 8 4.500z" fill="#fff" /><path d="M28 1 16 14.500h8L21 25l12-13.500h-8z" fill="#fff" /></svg>
      <svg viewBox="0 0 36 26" className="ml-[34px] w-[36px]" fill="none" stroke="#fff" strokeWidth="4"><path d="M2 9.500a23 23 0 0 1 32 0M8 15.500a14 14 0 0 1 20 0" /><path d="m18 25 5.500-5.600a8 8 0 0 0-11 0z" fill="#fff" stroke="none" /></svg>
      <svg viewBox="0 0 28 28" className="ml-[37px] w-[28px]"><circle cx="14" cy="14" r="12.500" fill="none" stroke="#fff" strokeWidth="2.500" /><circle cx="14" cy="11" r="4.800" fill="#fff" /><path d="M5 22c3-6 15-6 18 0a12 12 0 0 1-18 0z" fill="#fff" /></svg>
      <svg viewBox="0 0 28 28" className="ml-[34px] w-[28px]" fill="none" stroke="#fff" strokeWidth="2.800"><circle cx="11.500" cy="11.500" r="9" /><path d="m18 18 8.500 8.500" /></svg>
      <svg viewBox="0 0 30 28" className="ml-[36px] w-[30px]"><rect x="1.300" y="1.300" width="27.400" height="11" rx="5.500" fill="none" stroke="#fff" strokeWidth="2.500" /><circle cx="8" cy="6.800" r="4" fill="#fff" /><rect y="15.500" width="30" height="12.500" rx="6.200" fill="#fff" /><circle cx="23.500" cy="21.700" r="3.600" fill="#5a2bd0" /></svg>
      <svg viewBox="0 0 28 28" className="ml-[35px] w-[28px]">
        <defs>
          <linearGradient id="siri" x1="0" y1="0" x2=".4" y2="1"><stop offset="0" stopColor="#3a2f5a" /><stop offset=".3" stopColor="#b0386f" /><stop offset=".55" stopColor="#5fc5c0" /><stop offset="1" stopColor="#2a4fb0" /></linearGradient>
        </defs>
        <circle cx="14" cy="14" r="13" fill="url(#siri)" stroke="#2b2540" strokeWidth="2" /><path d="M9 21c3-5 5-9 8-14M7 12c5 1 9 3 14 6" stroke="#eaf6ff" strokeWidth="2" fill="none" /><circle cx="14" cy="14.500" r="3" fill="#fff" />
      </svg>
      <span className="ml-[31px] w-[183px] font-medium tracking-[-0.4px] whitespace-nowrap">3 Temmuz Cmt</span>
      <span className="mr-[35px] ml-[16px] w-[72px] font-medium tracking-[0.4px]">19:36</span>
    </div>
  );
}

/* ---------- app chrome ---------- */

function TabBar() {
  return (
    <div className="flex h-[76px] items-center border-t-2 border-[#6b6b6b] bg-[#222222] pb-[2px] text-[22px] tracking-[0] text-[#b3b3b3]">
      <div className="flex gap-[17px] pl-[25px]">{[0, 1, 2].map((i) => <Dot key={i} className="size-6 border-2 border-[#555]" />)}</div>
      <svg viewBox="0 0 26 28" className="ml-[51px] w-[26px]" fill="#828282"><path d="M13 0 26 11v17h-9V18H9v10H0V11z" /></svg>
      <span className="ml-[55px] w-[203px] font-medium">My Website</span>
      <span className="w-[425px] font-medium whitespace-nowrap">Material Design Icons (Community)</span>
      <div className="-mb-[2px] flex h-[74px] w-[208px] items-center bg-[#2c2c2c] pb-[2px] pl-[25px] font-semibold tracking-[-0.1px] text-white">
        <span className="w-[149px]">DAW Project</span>
        <svg viewBox="0 0 16 16" className="w-[16px]" stroke="#666" strokeWidth="2"><path d="m1 1 14 14M15 1 1 15" /></svg>
      </div>
      <svg viewBox="0 0 20 20" className="ml-[20px] w-[20px]" stroke="#888" strokeWidth="2"><path d="M10 0v20M0 10h20" /></svg>
    </div>
  );
}

const Caret = ({ className = "text-[#e5e5e5]" }: IconProps) => (
  <svg viewBox="0 0 14 10" className={`h-[10px] w-[14px] shrink-0 ${className}`} fill="none" stroke="currentColor" strokeWidth="2"><path d="m1 2 6 6 6-6" /></svg>
);

function Toolbar() {
  return (
    <div className="flex h-24 items-center bg-[#2c2c2c] text-[#e5e5e5]">
      <svg viewBox="0 0 24 34" className="ml-[28px] w-[24px]" fill="none" stroke="currentColor" strokeWidth="2"><path d="M12 1H6.500a5.300 5.300 0 0 0 0 10.600H12zM12 1h5.500a5.300 5.300 0 0 1 0 10.600H12M12 11.600H6.500a5.300 5.300 0 0 0 0 10.600H12zM12 22.200H6.500A5.300 5.300 0 1 0 12 27.500z" /><circle cx="17.500" cy="17" r="5.300" /></svg>
      <Caret className="ml-[13px] text-[#e5e5e5]" />
      <div className="ml-[25px] flex h-full w-[96px] items-center bg-[#4b9ef4] text-white">
        <svg viewBox="0 0 26 30" className="ml-[29px] w-[26px]" fill="none" stroke="currentColor" strokeWidth="2.200"><path d="M2 2 24.500 15 13 18 7 28.500z" /></svg>
        <Caret className="ml-[16px] text-white" />
      </div>
      <svg viewBox="0 0 32 32" className="ml-[28px] w-[32px]" fill="none" stroke="currentColor" strokeWidth="2"><path d="M7 0v32M25 0v32M0 7h32M0 25h32" /></svg>
      <Caret className="ml-[11px] text-[#e5e5e5]" />
      <svg viewBox="0 0 32 32" className="ml-[37px] w-[32px]" fill="none" stroke="currentColor" strokeWidth="2"><path d="M1 1h30v30H1z" /></svg>
      <Caret className="ml-[13px] text-[#e5e5e5]" />
      <svg viewBox="0 0 34 32" className="ml-[37px] w-[34px]" fill="none" stroke="currentColor" strokeWidth="2.200"><path d="m2 2 18 4c5 3 7 8 7 14l-7 6c-6 0-11-2-13-6zM3 3l12 12M25 22l6 4-6 5-4-5" /><circle cx="17" cy="16" r="3" /></svg>
      <Caret className="ml-[11px] text-[#e5e5e5]" />
      <svg viewBox="0 0 26 32" className="ml-[37px] w-[26px]" fill="none" stroke="currentColor" strokeWidth="2"><path d="M1 8V1h24v7M13 1v30M7 31h12" /></svg>
      <svg viewBox="0 0 36 40" className="ml-[49px] w-[36px]" fill="none" stroke="currentColor" strokeWidth="2.200"><path d="M10 23V8.500a3 3 0 0 1 6 0V18 4a3 3 0 0 1 6 0v14V6a3 3 0 0 1 6 0v13-8a3 3 0 0 1 6 0v14c0 9-5 14-12 14-8 0-11-5-14-10l-5.500-8c-2-4 2.500-6.500 5-3z" /></svg>
      <svg viewBox="0 0 36 34" className="ml-[43px] w-[36px]" fill="none" stroke="currentColor" strokeWidth="2.200"><path d="M5 26a15.500 15.500 0 1 1 7 5.200C8 33 5 32.500 2 32.500 4 31 5 29 5 26z" /></svg>
      <div className="ml-[802px] flex items-center text-[27px] tracking-[0.1px] whitespace-nowrap">
        <span className="w-[93px] tracking-[0.5px] text-[#a6a6a6]">Drafts</span>
        <svg viewBox="0 0 12 32" className="w-[12px]" stroke="#777" strokeWidth="2"><path d="M11 0 1 32" /></svg>
        <span className="ml-[13px] w-[173px] text-white">DAW Project</span>
        <Caret className="text-white" />
      </div>
      <span className="ml-auto flex size-12 items-center justify-center rounded-full bg-[#5551ff] text-[24px] font-medium text-white">S</span>
      <span className="ml-[41px] flex h-[60px] w-[109px] items-center justify-center rounded-[10px] bg-[#4b9ef4] text-[22px] font-semibold tracking-[-0.2px] text-white">Share</span>
      <svg viewBox="0 0 20 24" className="ml-[51px] w-[20px]" fill="none" stroke="currentColor" strokeWidth="2"><path d="M1.200 2v20L18 12z" /></svg>
      <span className="ml-[66px] w-[51px] text-[22px]">21%</span>
      <Caret className="mr-[31px] text-[#e5e5e5]" />
    </div>
  );
}

const TIcon = ({ className }: IconProps) => <svg viewBox="0 0 20 20" className={className} fill="none" stroke="#b0b0b0" strokeWidth="2"><path d="M1 5V1h18v4M10 1v18M5.500 19h9" /></svg>;
const GroupIcon = ({ className }: IconProps) => <svg viewBox="0 0 20 20" className={className} fill="none" stroke="#b0b0b0" strokeWidth="2"><path d="M3 1H1v2M8 1h4M17 1h2v2M1 8v4M19 8v4M1 17v2h2M8 19h4M17 19h2v-2" /></svg>;

const layers: { name: string; icon: "t" | "g" | "f"; locked?: boolean }[] = [
  { name: "Tablo tasarımı Piano roll daki gibi o...", icon: "t" },
  { name: ".mixerde bağlanma olayı olmayacak", icon: "t" },
  { name: "Group 2", icon: "g" },
  { name: "Timeline", icon: "f" },
  { name: "Pattern", icon: "f", locked: true },
  { name: "Piano Roll", icon: "f", locked: true },
  { name: "Mixer", icon: "f", locked: true },
  { name: "Save", icon: "f", locked: true },
  { name: "Settings", icon: "f", locked: true },
  { name: "Audio Edit", icon: "f", locked: true },
];

function LeftPanel() {
  return (
    <nav className="h-full w-[480px] shrink-0 bg-white text-[22px] tracking-[0.08px] text-[#333] shadow-[1px_0_0_#dcdcdc]">
      <div className="flex h-[81px] items-center border-b-2 border-[#e5e5e5] pt-[1px] pl-8">
        <span className="w-[102px] font-semibold tracking-[-0.1px]">Layers</span>
        <span className="font-medium text-[#b3b3b3]">Assets</span><Dot className="mb-[16px] size-2 bg-[#333]" />
        <span className="ml-[141px] w-[78px]">Page 1</span><Caret className="text-[#b3b3b3]" />
      </div>
      <div className="-mt-[1px]">
        {layers.map((l) => (
          <div key={l.name} className="flex h-16 items-center pl-[37px] whitespace-nowrap">
            {l.icon === "t" ? <TIcon className="ml-[1px] size-5" /> : l.icon === "g" ? <GroupIcon className="ml-[1px] size-5" /> : <HashIcon className="size-[22px]" />}
            <span className={`flex-1 ${l.icon === "f" ? "pl-[21px] font-semibold tracking-[0.05px]" : "pl-[22px]"}`}>{l.name}</span>
            {l.locked && <svg viewBox="0 0 14 20" className="mr-[72px] w-[14px]"><path d="M3 9V5.500a4 4 0 0 1 8 0V9" fill="none" stroke="#333" strokeWidth="2" /><rect y="8.500" width="14" height="11.500" rx="1" fill="#333" /></svg>}
          </div>
        ))}
      </div>
    </nav>
  );
}

const styles = [["Theme", "#f5bd41"], ["Red", "#ed5a46"], ["Mor", "#6619f5"], ["Green", "#75e845"], ["Turkuaz", "#60d5fd"], ["Icon", "#5b5b5b"], ["Border", "#a6a6a6"], ["Soft Grey", "#dcdcdc"], ["Background Soft Grey", "#f4f4f4"], ["Background", "#ffffff"]];

function RightPanel() {
  return (
    <aside className="relative flex h-full w-[480px] shrink-0 flex-col bg-white text-[22px] tracking-[0.08px] text-[#333] shadow-[-1px_0_0_#dcdcdc]">
      <div className="flex h-[81px] shrink-0 items-center border-b-2 border-[#e5e5e5] pt-[1px] pl-8">
        <span className="w-[105px] font-semibold tracking-[0]">Design</span><span className="w-[136px] font-medium text-[#b3b3b3]">Prototype</span><span className="font-medium text-[#b3b3b3]">Inspect</span>
      </div>
      <div className="h-[162px] shrink-0 border-b-2 border-[#e5e5e5] pt-[33px] pl-8">
        <p className="leading-8 font-semibold tracking-[-0.05px]">Background</p>
        <div className="mt-[32px] flex h-8 items-center">
          <i className="size-8 rounded-[2px] border border-[#dedede] bg-[#e9e9e9]" /><span className="ml-[16px] w-[146px]">E9E9E9</span><span className="w-[193px]">100%</span>
          <svg viewBox="0 0 26 18" className="w-[26px]" fill="none" stroke="#333" strokeWidth="2"><path d="M1 9c6-10 18-10 24 0-6 10-18 10-24 0z" /><circle cx="13" cy="9" r="4" fill="#333" stroke="none" /></svg>
        </div>
      </div>
      <div className="h-[811px] shrink-0 border-b-2 border-[#e5e5e5] pt-[31px] pl-8">
        <p className="leading-8 font-semibold tracking-[-0.05px]">Color Styles</p>
        <div className="mt-[26px]">
          {styles.map(([n, c], i) => <div key={n} className="flex h-[68px] items-center pl-[2px]"><span className={`mr-[16px] size-8 rounded-full ${i > 7 ? "border border-[#d6d6d6]" : ""}`} style={{ backgroundColor: c }} />{n}</div>)}
        </div>
      </div>
      <div className="flex h-[98px] shrink-0 items-center justify-between border-b-2 border-[#e5e5e5] pr-[37px] pl-8 font-semibold text-[#b3b3b3]">
        Export<svg viewBox="0 0 22 22" className="w-[22px]" stroke="#b3b3b3" strokeWidth="2"><path d="M11 0v22M0 11h22" /></svg>
      </div>
      <span className="mt-auto mr-[48px] mb-[47px] flex size-[72px] items-center justify-center self-end rounded-full bg-[#2c2c2c] text-[34px] font-light tracking-[0] text-white">?</span>
    </aside>
  );
}

/* ---------- dock ---------- */

const Tile = ({ className = "", children }: { className?: string; children?: React.ReactNode }) => (
  <div className={`flex size-[71px] items-center justify-center overflow-hidden rounded-[17px] shadow-[0_2px_5px_rgba(0,0,0,.35)] ${className}`}>{children}</div>
);

const S = ({ children }: { children: React.ReactNode }) => <svg viewBox="0 0 71 71" className="size-[71px]">{children}</svg>;

const launchColors = ["#7fe35f", "#f2b63a", "#ec8a32", "#d9382c", "#a9a9b2", "#ef4b63", "#9b45dd", "#3e8df2", "#66cfa8"];

const dockIcons: { art: React.ReactNode; badge?: string; running?: boolean }[] = [
  { running: true, art: <Tile className="bg-linear-to-b from-[#5ac3fa] to-[#2f62ea]"><S><path d="M38 0c-4 14-7 28-7 41h10c0 10 1 20 4 30h26V0z" fill="#e4e7ef" /><path d="M38 0c-4 14-7 28-7 41h10" fill="none" stroke="#3a7fe0" strokeWidth="1" /><path d="M19 21v6M52 21v6" stroke="#1f2440" strokeWidth="3" strokeLinecap="round" /><path d="M14 48c12 11 31 11 43 0" fill="none" stroke="#141a30" strokeWidth="2.400" strokeLinecap="round" /></S></Tile> },
  { art: <Tile className="bg-[#c4b3d6]"><div className="grid grid-cols-3 gap-[4px]">{launchColors.map((c) => <i key={c} className="size-[13px] rounded-[3px]" style={{ backgroundColor: c }} />)}</div></Tile> },
  { badge: "1", art: <Tile className="bg-linear-to-b from-[#d5e0e6] to-[#85857f]"><S><circle cx="35.500" cy="35.500" r="30" fill="#2b2b2d" stroke="#3a3a3c" strokeWidth="1" /><circle cx="35.500" cy="35.500" r="26.500" fill="none" stroke="#8d8d8f" strokeWidth="3" strokeDasharray="1.500 1.500" /><circle cx="35.500" cy="35.500" r="21" fill="none" stroke="#8f8f91" strokeWidth="5" /><circle cx="35.500" cy="35.500" r="5" fill="none" stroke="#9a9a9c" strokeWidth="3" /><path d="M41 35.500h15M33 31l-8-13M33 40l-8 13" stroke="#8c8c8e" strokeWidth="4" /></S></Tile> },
  { badge: "2", running: true, art: <Tile className="bg-linear-to-b from-[#3166ea] to-[#5cc4f9]"><S><rect x="11" y="20" width="49" height="32" rx="4" fill="#eef0f2" /><path d="m12 50 18-17M59 50 41 33" stroke="#b9bcc2" strokeWidth="1.300" /><path d="m12 22 20 18c2 2 5 2 7 0l20-18" fill="#f7f7f8" stroke="#a9acb2" strokeWidth="1.300" /></S></Tile> },
  { art: <Tile className="bg-linear-to-b from-[#85ee7e] to-[#4cb83c]"><S><rect x="11" y="20" width="34" height="32" rx="8" fill="#eef7ee" /><path d="m48 33 11-9v24l-11-9z" fill="#e3f1e2" /></S></Tile> },
  { art: <Tile className="bg-[#d8c266]"><S><path d="M0 0h71v40c0 14-9 24-22 24H12C5 64 0 59 0 52z" fill="#f9ea93" /><path d="M14 24c2-14 6-14 6-3 3-9 6-9 7-1 3-4 5-3 6 1h25M12 35h48M12 47h25" fill="none" stroke="#dcc566" strokeWidth="4" /></S></Tile> },
  { art: <Tile className="flex-col bg-[#f8f7f5]"><span className="flex h-[22px] w-full items-center justify-center bg-[#e4564a] text-[15px] font-semibold text-white">TEM</span><span className="flex-1 text-[42px] leading-[46px] font-light text-[#222]">3</span></Tile> },
  { art: <Tile className="bg-linear-to-b from-white to-[#e6e3df]"><S><rect width="71" height="18" fill="#f7c93f" /><path d="M0 20h71" stroke="#b9b6ae" strokeWidth="2" strokeDasharray="1 1.500" /><path d="M0 35h71M0 53h71" stroke="#cfccc8" strokeWidth="1.400" /></S></Tile> },
  { art: <Tile className="bg-[#f8f7f6]"><S>{[["#3a7df0", 18], ["#e2493b", 36], ["#e99a35", 54]].map(([c, y]) => <g key={c}><circle cx="14" cy={y} r="4.600" fill={c as string} /><circle cx="14" cy={y} r="6.500" fill="none" stroke={c as string} strokeWidth="1" /><path d={`M27 ${y}h37`} stroke="#b9b9bd" strokeWidth="1.400" /></g>)}</S></Tile> },
  { art: <Tile className="bg-linear-to-b from-[#4dabef] to-[#2461dc]"><S><g stroke="#fff" strokeWidth="5.500" strokeLinecap="round"><path d="M38 16 22 43M33 16l22 38M13 44h26M49 44h9M19 50l-2 4" /></g></S></Tile> },
  { art: <Tile className="bg-linear-to-b from-[#fafafa] to-[#d2d2d2]"><S><circle cx="35.500" cy="35.500" r="30" fill="#2f8ae8" /><circle cx="35.500" cy="35.500" r="27" fill="none" stroke="#a9d4fa" strokeWidth="3" strokeDasharray=".8 2" /><path d="m57 18-24 14 6 8z" fill="#e2402f" /><path d="m14 55 19-23 6 8z" fill="#f4f4f4" /></S></Tile> },
  { running: true, art: <Tile className="bg-[#f7f6f4]"><S><circle cx="35.500" cy="35.500" r="29" fill="#f6c945" /><path d="M10.400 21A29 29 0 0 1 60.600 21H35.500v14.500z" fill="#d44c3c" /><path d="M10.400 21A29 29 0 0 0 35.500 64.500L48 43l-12-8z" fill="#3d9b54" /><path d="M10.400 21A29 29 0 0 1 60.600 21H36z" fill="#d44c3c" /><circle cx="35.500" cy="35.500" r="13.500" fill="#f3f3f3" /><circle cx="35.500" cy="35.500" r="10.500" fill="#4a80ee" /></S></Tile> },
  { art: <svg viewBox="0 0 80 72" className="size-[80px]"><path d="M27 1h26L13 71 0 48z" fill="#3f9f52" /><path d="M27 1h26l27 47H54z" fill="#f2bd3d" /><path d="M27 1h26L40 24z" fill="#2f7d3e" /><path d="M0 48h80L67 71H13z" fill="#4d82e8" /><path d="M0 48h26L13 71z" fill="#3264cc" /><path d="M54 48h26L67 71z" fill="#d94c3c" /><path d="m40 24 14 24H26z" fill="#44196f" /></svg> },
  { art: <Tile className="bg-linear-to-b from-[#7686f6] to-[#525fe8]"><FaDiscord className="size-[50px] text-white" /></Tile> },
  { art: <Tile className="bg-linear-to-b from-[#4ba0ea] to-[#4689cf]"><FaTwitter className="size-[46px] text-white" /></Tile> },
  { badge: "1", running: true, art: <svg viewBox="0 0 78 78" className="size-[78px]"><path d="M39 1a38 38 0 1 1-17 72L1 77l5-20A38 38 0 0 1 39 1z" fill="#f1f1f3" /><path d="M39.500 8a31 31 0 1 1-16 57.500L10 69l4-13A31 31 0 0 1 39.500 8z" fill="#5fc058" /><path transform="translate(16 15) scale(1.950)" d="M6.600 10.800a15 15 0 0 0 6.600 6.600l2.200-2.200c.3-.3.700-.4 1-.2 1.100.4 2.300.6 3.600.6.500 0 1 .4 1 1V20c0 .5-.5 1-1 1A17 17 0 0 1 3 4c0-.5.5-1 1-1h3.500c.5 0 1 .5 1 1 0 1.300.2 2.500.6 3.600.1.300 0 .7-.3 1z" fill="#fff" /></svg> },
  { art: <svg viewBox="0 0 78 78" className="size-[78px]"><circle cx="39" cy="39" r="38.500" fill="#65d36e" /><g fill="none" stroke="#111" strokeLinecap="round"><path d="M16 25c15-4 34-3 48 5" strokeWidth="8" /><path d="M18 39c13-4 28-2 40 4" strokeWidth="6.500" /><path d="M20 52c11-3 23-1 33 4" strokeWidth="5" /></g></svg> },
  { running: true, art: <svg viewBox="0 0 88 88" className="size-[88px]"><circle cx="44" cy="46" r="41" fill="#303437" stroke="#63676a" strokeWidth="5" /><path d="M31 22c-10 12-13 36 2 59 16-12 26-34 29-54-6-10-22-13-31-5z" fill="#e97f2c" /><path d="M29 26c-6 10-6 24-2 34 7-8 9-22 8-34z" fill="#f9dc55" opacity=".85" /><path d="M24 15c6-8 16-9 24-5 10 3 16 10 17 19-4-4-8-6-12-6 4 6 4 12 0 18-5-4-9-10-10-18-6 0-13-1-19-8z" fill="#5e8f35" /><path d="M36 14c6 4 12 8 22 10M44 16c4 6 6 12 8 20" stroke="#8dbb50" strokeWidth="2" fill="none" /><path d="M52 14c4-4 8-9 11-14" stroke="#b9b35e" strokeWidth="2" fill="none" /></svg> },
  { art: <svg viewBox="0 0 78 78" className="size-[78px]"><circle cx="39" cy="39" r="38" fill="#1f1f20" />{"SPITFIRE".split("").map((c, i) => <text key={i} x="39" y="18" fontSize="10" fontFamily="Inter" fill="#eee" textAnchor="middle" transform={`rotate(${-70 + i * 25} 39 39)`}>{c}</text>)}{"AUDIO".split("").map((c, i) => <text key={`a${i}`} x="39" y="18" fontSize="10" fontFamily="Inter" fill="#eee" textAnchor="middle" transform={`rotate(${142 + i * 26} 39 39)`}>{c}</text>)}</svg> },
  { running: true, art: <Tile className="bg-linear-to-b from-[#2e2523] to-[#121516]"><S><path d="M35.500 11H27a8.500 8.500 0 0 0 0 17h8.500z" fill="#eb5a32" /><path d="M35.500 11H44a8.500 8.500 0 0 1 0 17h-8.500z" fill="#f17f6b" /><path d="M35.500 28H27a8.500 8.500 0 0 0 0 17h8.500z" fill="#9a5bf7" /><circle cx="44" cy="36.500" r="8.500" fill="#55b8f7" /><path d="M35.500 45H27a8.500 8.500 0 1 0 8.500 8.500z" fill="#5fce83" /></S></Tile> },
  { running: true, art: <Tile className="bg-white"><S><path d="M46 10 61 17v38l-15 7-1-1V11z" fill="#4a9fe8" /><path d="M46 10v15L17 50l-6-5zM46 62V47L17 22l-6 5z" fill="#2d6fbd" /></S></Tile> },
  { art: <Tile className="bg-linear-to-b from-[#8c3bb0] to-[#5b3197]"><FaGithub className="size-[58px] text-[#f2eef8]" /></Tile> },
  { art: <Tile className="border-2 border-[#c6d2d8] bg-black"><div className="size-[58px] rounded-[12px] border border-[#444] bg-[#262626] pt-[5px] pl-[6px] font-['Liberation_Mono'] text-[17px] leading-[20px] font-bold text-white">&gt;_</div></Tile> },
  { art: <Tile className="border-2 border-[#c6d2d8] bg-black"><svg viewBox="0 0 58 58" className="size-[58px]"><rect width="58" height="58" rx="11" fill="#16211f" /><path d="M0 15h58M0 29h58M0 43h58M15 0v58M29 0v58M43 0v58" stroke="#2f4a46" strokeWidth="1" /><path d="M2 33h8l5-26 6 36 5-12h4l5-5 6 10 6-6 5 2" fill="none" stroke="#6db8a5" strokeWidth="1.800" /></svg></Tile> },
];

function Dock() {
  return (
    <div className="relative mx-auto mt-[2px] flex h-[111px] w-[2444px] shrink-0 rounded-[44px] border-2 border-white/25 bg-[linear-gradient(90deg,#5b2a80_0%,#3f1568_22%,#42176f_40%,#4c1f7a_58%,#30204f_75%,#55205f_88%,#4a1a55_95%,#34145c_100%)] pl-[4px] shadow-[0_-6px_70px_8px_rgba(0,0,0,.28)]">
      {dockIcons.map((d, i) => (
        <div key={i} className="flex w-[92px] shrink-0 flex-col items-center">
          <div className="relative flex h-[99px] items-center justify-center">
            {d.art}
            {d.badge && <span className="absolute top-[6px] -right-[8px] flex size-[33px] items-center justify-center rounded-full bg-[#e54b3f] text-[20px] text-white">{d.badge}</span>}
          </div>
          {d.running && <Dot className="-mt-[3px] size-[8px] bg-[#d9a0f7]" />}
        </div>
      ))}
      <i className="mt-[13px] ml-[20px] h-[82px] w-[2px] bg-white/30" />
      <div className="mt-[8px] ml-[34px] flex h-[84px] w-[57px] flex-col items-center justify-center border border-[#ccc] bg-white"><FaSoundcloud className="size-[50px] text-black" /></div>
      <svg viewBox="0 0 62 80" className="mt-[12px] ml-[32px] h-[80px] w-[62px]"><path d="M1 8h60l-8 64c-3 9-41 9-44 0z" fill="#6f7577" opacity=".9" /><ellipse cx="31" cy="9" rx="30" ry="8" fill="#59505f" stroke="#8b8f92" strokeWidth="2" /></svg>
    </div>
  );
}

function Wallpaper() {
  return (
    <svg viewBox="0 0 3360 2100" className="absolute inset-0 size-full">
      <defs>
        <linearGradient id="wl"><stop offset="0" stopColor="#3c0c84" /><stop offset=".8" stopColor="#3b0c84" /><stop offset=".87" stopColor="#24074a" /><stop offset=".94" stopColor="#35086f" /></linearGradient>
        <linearGradient id="wp"><stop offset="0" stopColor="#9440d8" /><stop offset="1" stopColor="#7a34c4" /></linearGradient>
        <linearGradient id="wt" x2="0" y2="1"><stop offset=".38" stopColor="#000" stopOpacity=".65" /><stop offset=".85" stopColor="#000" stopOpacity="0" /></linearGradient>
      </defs>
      <rect width="3360" height="2100" fill="#5a2bd0" />
      <rect y="1900" width="3360" height="200" fill="url(#wl)" />
      <path d="M0 1900h660l-110 200H0z" fill="url(#wp)" />
      <rect y="1900" width="3360" height="200" fill="url(#wt)" />
      <path d="M3078 1970h282v130h-229z" fill="#07021a" /><path d="M3175 1970h185v130h-115z" fill="#0d0526" />
      <path d="m2074 2100 30-14h76l12 14z" fill="#8e3a8e" /><path d="M2172 2086h330l20 14h-330z" fill="#12043a" />
      <path d="m2172 2086 14 14h10l-10-14zM2218 2086l8 14h-8zM2300 2086l8 14h8l-6-14zM2384 2086l5 14h8zM2442 2086l2 14h5z" fill="#3f8a9a" /><path d="m2258 2086 20 14h22l-10-14z" fill="#9a3f9a" />
      <path d="M2535 2086h36l-4 14h-34z" fill="#8a3aa5" /><path d="M2594 2086h50l12 14h-62z" fill="#d84a56" />
    </svg>
  );
}

export default function App() {
  return (
    <div className="relative flex h-[2100px] w-[3360px] flex-col overflow-hidden bg-[#5a2bd0] [font-family:Inter,sans-serif]">
      <Wallpaper />
      <div className="relative"><MenuBar /></div>
      <div className="relative mt-[1px] flex h-[1929px] shrink-0 flex-col overflow-hidden rounded-[20px] border-t border-black bg-[#222] shadow-[0_0_0_2px_#000]">
        <TabBar />
        <Toolbar />
        <div className="flex min-h-0 flex-1"><LeftPanel /><Canvas /><RightPanel /></div>
      </div>
      <Dock />
    </div>
  );
}
